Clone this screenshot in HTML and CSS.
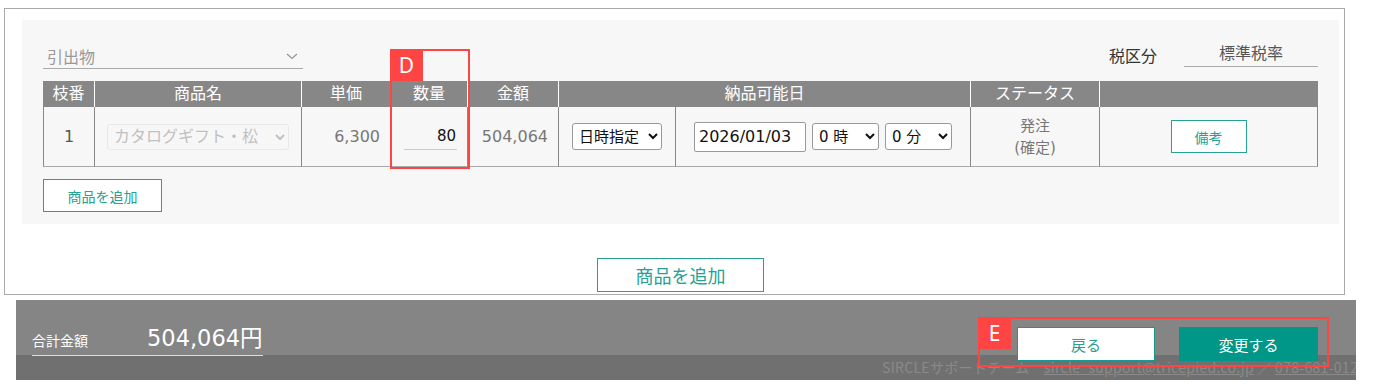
FILE: index.html
```html
<!DOCTYPE html>
<html lang="ja">
<head>
  <meta charset="UTF-8" />
  <meta name="viewport" content="width=device-width, initial-scale=1.0"/>
  <title>引出物の変更</title>
  <link rel="stylesheet" href="styles.css">
</head>
<body>
  <div class="card">
    <div class="panel">
      <div class="panel-top">
        <div class="plain-select">
          <span>引出物</span>
          <svg width="12" height="7" viewBox="0 0 12 7"><path d="M1 1l5 4.5L11 1" fill="none" stroke="#999" stroke-width="1.3"/></svg>
        </div>
        <div class="tax">
          <span class="tax-label">税区分</span>
          <span class="tax-value">標準税率</span>
        </div>
      </div>

      <div class="table-wrap">
        <table class="items">
          <colgroup>
            <col style="width:51px">
            <col style="width:207px">
            <col style="width:89px">
            <col style="width:77px">
            <col style="width:91px">
            <col style="width:117px">
            <col style="width:295px">
            <col style="width:129px">
            <col style="width:219px">
          </colgroup>
          <thead>
            <tr>
              <th>枝番</th>
              <th>商品名</th>
              <th>単価</th>
              <th>数量</th>
              <th>金額</th>
              <th colspan="2">納品可能日</th>
              <th>ステータス</th>
              <th></th>
            </tr>
          </thead>
          <tbody>
            <tr>
              <td class="no">1</td>
              <td class="left">
                <select class="sel sel-product" disabled>
                  <option>カタログギフト・松</option>
                </select>
              </td>
              <td class="num">6,300</td>
              <td class="num"><input class="qty" type="text" value="80"></td>
              <td class="num">504,064</td>
              <td>
                <select class="sel sel-kind">
                  <option>日時指定</option>
                </select>
              </td>
              <td>
                <div class="date-group">
                  <input class="date-input" type="text" value="2026/01/03">
                  <select class="sel sel-time">
                    <option>0 時</option>
                  </select>
                  <select class="sel sel-time">
                    <option>0 分</option>
                  </select>
                </div>
              </td>
              <td class="status">発注<br>(確定)</td>
              <td><button class="btn-outline btn-note">備考</button></td>
            </tr>
          </tbody>
        </table>
        <div class="mark mark-d"><span>D</span></div>
      </div>

      <button class="btn-outline btn-small">商品を追加</button>
    </div>

    <div class="add-row">
      <button class="btn-outline btn-large">商品を追加</button>
    </div>
  </div>

  <div class="footer">
    <div class="footer-main">
      <div class="total">
        <span class="total-label">合計金額</span>
        <span class="total-value">504,064円</span>
      </div>
      <div class="actions">
        <button class="btn-back">戻る</button>
        <button class="btn-submit">変更する</button>
        <div class="mark mark-e"><span>E</span></div>
      </div>
    </div>
    <div class="footer-note">SIRCLEサポートチーム　<a href="#">sircle_support@tricepied.co.jp</a> ／ <a href="#">078-681-0120</a></div>
  </div>
</body>
</html>
```

FILE: styles.css
```css
body {
  margin: 0;
  font-family: "DejaVu Sans", "Noto Sans CJK JP", sans-serif;
  color: #333;
  background-color: #fff;
}

button,
input,
select {
  font-family: "DejaVu Sans", "Noto Sans CJK JP", sans-serif;
}

.card {
  width: 1341px;
  box-sizing: border-box;
  margin: 8px 0 0 4px;
  border: 1px solid #aaa;
  padding: 11px 5px 2px 17px;
}

.panel {
  background-color: #f7f7f7;
  padding: 24px 21px 12px;
}

.panel-top {
  height: 25px;
  display: flex;
  justify-content: space-between;
  align-items: flex-end;
}

.plain-select {
  width: 260px;
  height: 25px;
  box-sizing: border-box;
  display: flex;
  align-items: center;
  justify-content: space-between;
  padding: 0 5px 0 4px;
  border-bottom: 1px solid #aaa;
  color: #999;
  font-size: 16px;
}

.tax {
  display: flex;
  align-items: center;
  gap: 27px;
  margin-bottom: 2px;
  font-size: 16px;
}

.tax-label {
  color: #333;
}

.tax-value {
  width: 134px;
  text-align: center;
  line-height: 24px;
  border-bottom: 1px solid #aaa;
  color: #555;
}

.table-wrap {
  position: relative;
  margin-top: 12px;
}

.items {
  width: 1275px;
  table-layout: fixed;
  border-collapse: separate;
  border-spacing: 0;
}

.items th {
  height: 26px;
  padding: 0;
  background-color: #878787;
  color: #fff;
  font-size: 16px;
  font-weight: normal;
  line-height: 26px;
  border-left: 1px solid #fff;
}

.items th:first-child {
  border-left: none;
}

.items td {
  height: 59px;
  padding: 0 10px;
  border-left: 1px solid #888;
  border-bottom: 1px solid #aaa;
  color: #777;
  font-size: 16px;
  text-align: center;
}

.items td:last-child {
  border-right: 1px solid #888;
}

.items td.no {
  color: #555;
}

.items td.left {
  padding-left: 12px;
  text-align: left;
}

.items td.num {
  text-align: right;
}

.items td.status {
  font-size: 15px;
  line-height: 22px;
}

.sel {
  height: 27px;
  padding: 0 2px;
  border: 1px solid #999;
  border-radius: 3px;
  background-color: #fff;
  color: #111;
  font-size: 15px;
}

.sel-product {
  width: 182px;
  height: 26px;
  border-color: #e2e2e2;
  background-color: #f8f8f8;
  color: #aaa;
  font-size: 16px;
}

.sel-kind {
  width: 90px;
}

.sel-time {
  width: 67px;
}

.date-group {
  display: flex;
  justify-content: center;
  align-items: center;
  gap: 6px;
}

.date-input {
  width: 112px;
  height: 30px;
  box-sizing: border-box;
  padding: 0 4px;
  border: 1px solid #999;
  border-radius: 2px;
  color: #111;
  font-size: 16px;
}

.qty {
  width: 53px;
  height: 26px;
  box-sizing: border-box;
  padding: 0 1px;
  border: none;
  border-bottom: 1px solid #ccc;
  background: transparent;
  color: #111;
  font-size: 15px;
  text-align: right;
}

.btn-outline {
  padding: 0;
  border: 1px solid #26a193;
  background-color: #fff;
  color: #26a193;
  cursor: pointer;
}

.btn-small {
  display: block;
  width: 119px;
  height: 33px;
  margin-top: 12px;
  font-size: 14px;
}

.btn-note {
  width: 76px;
  height: 33px;
  font-size: 14px;
}

.add-row {
  display: flex;
  justify-content: center;
  padding-top: 34px;
}

.btn-large {
  width: 167px;
  height: 34px;
  font-size: 18px;
}

/* annotation frames */
.mark {
  position: absolute;
  box-sizing: border-box;
  border: 2px solid #f44;
}

.mark span {
  position: absolute;
  left: -2px;
  top: -2px;
  width: 33px;
  height: 32px;
  display: flex;
  justify-content: center;
  align-items: center;
  background-color: #f44;
  color: #fff;
  font-family: "Noto Sans", sans-serif;
  font-size: 21px;
}

.mark-d {
  left: 347px;
  top: -32px;
  width: 80px;
  height: 120px;
}

.mark-e {
  left: -39px;
  top: -10px;
  width: 351px;
  height: 50px;
}

.footer {
  width: 1340px;
  height: 80px;
  margin: 5px 0 0 16px;
  background: linear-gradient(#858585 0 55px, #707070 55px);
  color: #fff;
  overflow: hidden;
}

.footer-main {
  display: flex;
  justify-content: space-between;
  align-items: flex-start;
  height: 55px;
  padding: 0 38px 0 16px;
}

.total {
  display: flex;
  align-items: baseline;
  gap: 59px;
  margin-top: 23px;
  padding-bottom: 2px;
  border-bottom: 1px solid #ddd;
}

.total-label {
  font-family: "Noto Sans CJK JP", sans-serif;
  font-size: 14px;
}

.total-value {
  font-size: 22.5px;
  line-height: 30px;
}

.actions {
  position: relative;
  display: flex;
  gap: 24px;
  margin-top: 27px;
}

.btn-back,
.btn-submit {
  height: 34px;
  padding: 0;
  font-size: 15px;
  cursor: pointer;
}

.btn-back {
  width: 138px;
  border: 1px solid #159a8b;
  background-color: #fff;
  color: #2a9d90;
}

.btn-submit {
  width: 139px;
  border: none;
  background-color: #009688;
  color: #fff;
}

.footer-note {
  height: 25px;
  padding-left: 866px;
  font-family: "Noto Sans CJK JP", sans-serif;
  font-size: 14px;
  letter-spacing: 0.3px;
  line-height: 25px;
  color: #8a8a8a;
  white-space: nowrap;
}

.footer-note a {
  color: #8a8a8a;
}
```
